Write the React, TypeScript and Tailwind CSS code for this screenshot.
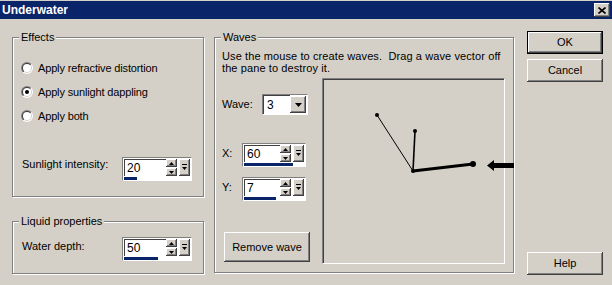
import React from "react";

const raised =
  "bg-[#d4d0c8] shadow-[inset_-1px_-1px_#404040,inset_1px_1px_#ffffff,inset_-2px_-2px_#808080,inset_2px_2px_#d4d0c8]";

function GroupBox({
  title,
  className,
  children,
}: {
  title: string;
  className: string;
  children?: React.ReactNode;
}) {
  return (
    <div
      className={
        "relative border border-[#808080] shadow-[inset_1px_1px_#ffffff,1px_1px_#ffffff] " +
        className
      }
    >
      <span className="absolute left-[6px] top-[-7px] bg-[#d4d0c8] px-[2px] leading-[13px]">
        {title}
      </span>
      {children}
    </div>
  );
}

function Radio({ checked, label }: { checked?: boolean; label: string }) {
  return (
    <div className="flex h-[24px] items-center gap-[5px]">
      <svg width="12" height="12" viewBox="0 0 12 12">
        <defs>
          <linearGradient id="ro" x1="0" y1="0" x2="1" y2="1">
            <stop offset="0.5" stopColor="#808080" />
            <stop offset="0.5" stopColor="#ffffff" />
          </linearGradient>
          <linearGradient id="ri" x1="0" y1="0" x2="1" y2="1">
            <stop offset="0.5" stopColor="#404040" />
            <stop offset="0.5" stopColor="#d4d0c8" />
          </linearGradient>
        </defs>
        <circle cx="6" cy="6" r="6" fill="url(#ro)" />
        <circle cx="6" cy="6" r="5" fill="url(#ri)" />
        <circle cx="6" cy="6" r="4" fill="#ffffff" />
        {checked && <circle cx="6" cy="6" r="2" fill="#000000" />}
      </svg>
      <span className="tracking-[-0.15px]">{label}</span>
    </div>
  );
}

function SpinBox({
  value,
  width,
  bar,
}: {
  value: string;
  width: string;
  bar: number;
}) {
  return (
    <div
      className={
        "flex h-[24px] flex-col border border-t-[#808080] border-l-[#808080] border-r-white border-b-white bg-white p-[1px] " +
        width
      }
    >
      <div className="flex h-[17px]">
        <div className="flex flex-1 items-center border-t border-l border-t-[#404040] border-l-[#404040] pl-[2px] text-[12px] leading-[13px]">
          {value}
        </div>
        <div className="flex w-[11px] flex-col">
          <div className={"flex h-[8px] items-center justify-center " + raised}>
            <svg width="5" height="3" viewBox="0 0 5 3">
              <path d="M2.5 0L5 3H0z" fill="#000" />
            </svg>
          </div>
          <div className={"mt-[1px] flex h-[8px] items-center justify-center " + raised}>
            <svg width="5" height="3" viewBox="0 0 5 3">
              <path d="M0 0H5L2.5 3z" fill="#000" />
            </svg>
          </div>
        </div>
        <div className={"ml-[2px] flex h-[17px] w-[11px] flex-col items-center justify-center " + raised}>
          <svg width="5" height="7" viewBox="0 0 5 7">
            <path d="M0 0H5V1H0z" fill="#000" />
            <path d="M0 3H5L2.5 6z" fill="#000" />
          </svg>
        </div>
      </div>
      <div className="mt-[1px] h-[3px]">
        <div className="h-[3px] bg-[#0a246a]" style={{ width: bar }} />
      </div>
    </div>
  );
}

export default function App() {
  return (
    <div className="relative h-[285px] w-[612px] overflow-hidden bg-[#d4d0c8] pt-[1px] font-['Liberation_Sans',Arial,sans-serif] text-[11px] text-black">
      {/* Title bar */}
      <div className="flex h-[18px] items-center justify-between bg-[#0a246a] pl-[2px] pr-[2px]">
        <span className="text-[12px] font-bold leading-[14px] text-white">Underwater</span>
        <div className={"flex h-[14px] w-[16px] items-center justify-center " + raised}>
          <svg width="8" height="7" viewBox="0 0 8 7">
            <path d="M0.5 0.5L7.5 6.5M7.5 0.5L0.5 6.5" stroke="#000" strokeWidth="1.6" />
          </svg>
        </div>
      </div>

      {/* Body */}
      <div className="flex h-[266px]">
        {/* Left column */}
        <div className="ml-[12px] flex w-[192px] flex-col">
          <GroupBox title="Effects" className="mt-[18px] h-[160px] pl-[8px] pt-[18px]">
            <Radio label="Apply refractive distortion" />
            <Radio checked label="Apply sunlight dappling" />
            <Radio label="Apply both" />
            <div className="mt-[29px] flex items-start">
              <span className="mt-[1px] w-[101px] pl-[1px] leading-[13px]">Sunlight intensity:</span>
              <SpinBox value="20" width="w-[70px]" bar={13} />
            </div>
          </GroupBox>
          <GroupBox title="Liquid properties" className="mt-[24px] h-[53px] pl-[8px] pt-[15px]">
            <div className="flex items-start">
              <span className="mt-[3px] w-[101px] pl-[1px] leading-[13px]">Water depth:</span>
              <SpinBox value="50" width="w-[70px]" bar={34} />
            </div>
          </GroupBox>
        </div>

        {/* Waves */}
        <GroupBox title="Waves" className="ml-[10px] mt-[18px] h-[236px] w-[300px] pt-[12px]">
          <p className="pl-[7px] leading-[12px] tracking-[0.1px]">
            {"Use the mouse to create waves.\u00a0 Drag a wave vector off"}
            <br />
            the pane to destroy it.
          </p>
          <div className="mt-[4px] flex">
            <div className="flex w-[107px] flex-col pl-[7px]">
              <div className="mt-[16px] flex items-center">
                <span className="w-[40px]">Wave:</span>
                <div className="flex h-[21px] w-[46px] items-center border border-t-[#808080] border-l-[#808080] border-r-white border-b-white bg-white">
                  <div className="flex h-[19px] flex-1 items-center border-t border-l border-t-[#404040] border-l-[#404040] pl-[3px] text-[12px]">
                    3
                  </div>
                  <div className={"flex h-[17px] w-[16px] items-center justify-center " + raised}>
                    <svg width="7" height="4" viewBox="0 0 7 4">
                      <path d="M0 0H7L3.5 4z" fill="#000" />
                    </svg>
                  </div>
                  <div className="w-[1px]" />
                </div>
              </div>
              <div className="mt-[28px] flex items-start">
                <span className="mt-[2px] w-[20px]">X:</span>
                <SpinBox value="60" width="w-[64px]" bar={49} />
              </div>
              <div className="mt-[10px] flex items-start">
                <span className="mt-[2px] w-[20px]">Y:</span>
                <SpinBox value="7" width="w-[64px]" bar={32} />
              </div>
              <button
                className={
                  "ml-[2px] mt-[31px] flex h-[30px] w-[86px] items-center justify-center " + raised
                }
              >
                Remove wave
              </button>
            </div>
            <div className="h-[186px] w-[183px] border border-t-[#808080] border-l-[#808080] border-r-white border-b-white">
              <div className="h-full w-full border-t border-l border-t-[#404040] border-l-[#404040]">
                <svg width="180" height="183" viewBox="0 0 180 183">
                  <line x1="53" y1="35" x2="89" y2="91" stroke="#000" strokeWidth="1" />
                  <line x1="91" y1="51" x2="89" y2="91" stroke="#000" strokeWidth="1.6" />
                  <line x1="149" y1="84" x2="89" y2="91" stroke="#000" strokeWidth="3" />
                  <circle cx="53" cy="35" r="2" fill="#000" />
                  <circle cx="91" cy="51" r="2" fill="#000" />
                  <circle cx="89" cy="91" r="2" fill="#000" />
                  <circle cx="149" cy="84" r="3" fill="#000" />
                </svg>
              </div>
            </div>
          </div>
          <svg
            className="absolute left-[272px] top-[122px]"
            width="27"
            height="11"
            viewBox="0 0 27 11"
          >
            <path d="M0 5.5L7 0V3H27V8H7V11z" fill="#000" />
          </svg>
        </GroupBox>

        {/* Buttons */}
        <div className="ml-[13px] flex w-[76px] flex-col pb-[10px]">
          <button
            className="mt-[12px] h-[23px] w-[76px] border border-black bg-[#d4d0c8] shadow-[inset_-1px_-1px_#404040,inset_1px_1px_#ffffff,inset_-2px_-2px_#808080]"
          >
            OK
          </button>
          <button className={"mt-[5px] h-[23px] w-[76px] " + raised}>Cancel</button>
          <button className={"mt-auto h-[23px] w-[76px] " + raised}>Help</button>
        </div>
      </div>
    </div>
  );
}
